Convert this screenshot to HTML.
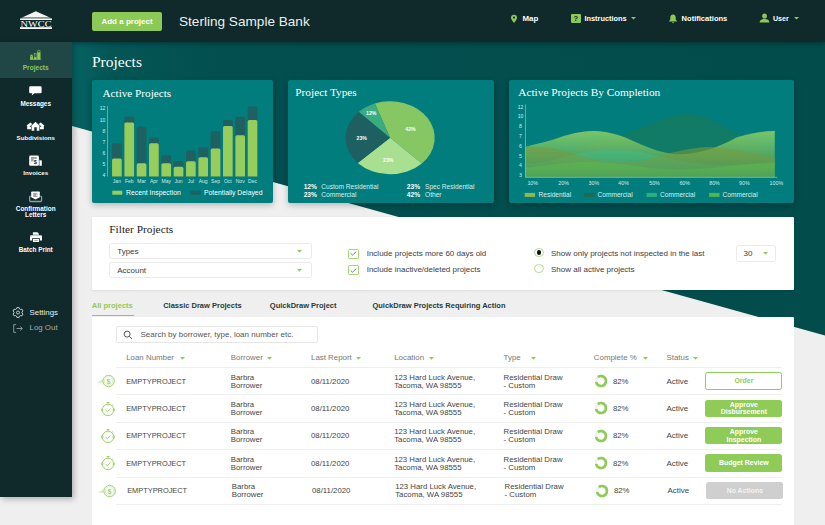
<!DOCTYPE html>
<html lang="en">
<head>
<meta charset="utf-8">
<title>Projects</title>
<style>
*{box-sizing:border-box;margin:0;padding:0}
html,body{width:825px;height:525px;overflow:hidden}
body{position:relative;background:#efefef;font-family:"Liberation Sans",sans-serif;color:#3a3a3a;font-size:7.5px}
.abs{position:absolute}
.serif{font-family:"Liberation Serif",serif}
#bg{position:absolute;left:0;top:0;width:825px;height:525px}
#header{position:absolute;left:0;top:0;width:825px;height:42px;background:#10292a;box-shadow:0 1px 5px rgba(0,0,0,.4)}
#sidebar{position:absolute;left:0;top:42px;width:72px;height:455px;background:#10292a;box-shadow:2px 2px 6px rgba(0,0,0,.28)}
.t{position:absolute;white-space:nowrap;line-height:1}
.w{color:#fff}
.sl{left:35.7px;transform:translate(-50%,-50%);font-size:6.4px}
.b{font-weight:bold}
.card{position:absolute;background:#007d7c;border-radius:2px;box-shadow:0 2px 6px rgba(0,0,0,.25)}
.panel{position:absolute;background:#fff;border-radius:1px}
/*LOWER*/
.sel{width:202.5px;height:16.1px;border:0.8px solid #e9e9e9;border-radius:2.5px;background:#fff}
.ft{font-size:8px;color:#3c3c3c;transform:translateY(-50%)}
.tb{font-size:7.5px;color:#1d3b3a;transform:translateY(-50%)}
.th{font-size:7.9px;color:#777;transform:translateY(-50%)}
.td{font-size:7.8px;color:#454545;transform:translateY(-50%)}
.td2{font-size:7.8px;color:#454545;transform:translateY(-50%);line-height:8px}
.btn{width:77.2px;height:17.5px;border-radius:2.5px;display:flex;align-items:center;justify-content:center;text-align:center;font-weight:bold;font-size:6.95px;line-height:7.4px}
/*LOWEREND*/
</style>
</head>
<body>
<svg id="bg" viewBox="0 0 825 525">
  <defs>
    <linearGradient id="g1" x1="0" x2="1" y1="0" y2="0">
      <stop offset="0" stop-color="#066362"/>
      <stop offset="0.05" stop-color="#045655"/>
      <stop offset="0.2" stop-color="#034f4f"/>
      <stop offset="1" stop-color="#034c4c"/>
    </linearGradient>
  </defs>
  <polygon points="72,42 825,42 825,335.6 72,126" fill="url(#g1)"/>
</svg>
<div id="header"></div>
<div id="sidebar"></div>

<!-- logo -->
<svg class="abs" style="left:19px;top:10px" width="34" height="20" viewBox="0 0 34 20">
  <polygon points="16.8,1.3 30.3,7.2 3.7,7.2" fill="#f4f4f4"/>
  <polygon points="3.7,7.2 30.3,7.2 32.4,8.6 1.6,8.6" fill="#fff" opacity=".5"/>
  <rect x="1" y="8.5" width="32" height="1.5" fill="#fff"/>
  <text x="17.1" y="16.75" text-anchor="middle" font-family="Liberation Serif, serif" font-size="7.6" fill="#fff" textLength="31" lengthAdjust="spacingAndGlyphs">NWCC</text>
  <rect x="1" y="17.2" width="32" height="1.8" fill="#fff"/>
</svg>
<div class="abs" style="left:92px;top:12.4px;width:70px;height:18.7px;background:#8dc955;border-radius:2px"></div>
<div class="t w b" style="left:127px;top:21.9px;font-size:8px;transform:translate(-50%,-50%)">Add a project</div>
<div class="t" style="left:179px;top:21.5px;font-size:13.6px;color:#e9f0f0;transform:translateY(-50%)">Sterling Sample Bank</div>
<!-- map pin -->
<svg class="abs" style="left:510px;top:14px" width="8" height="10" viewBox="0 0 8 10">
  <path d="M4 0.8C2.2 0.8 1 2.1 1 3.7C1 5.6 4 8.9 4 8.9S7 5.6 7 3.7C7 2.1 5.8 0.8 4 0.8Z" fill="#8dc955"/>
  <circle cx="4" cy="3.6" r="1.1" fill="#10292a"/>
</svg>
<div class="t w b" style="left:522.5px;top:18.6px;font-size:7.9px;transform:translateY(-50%)">Map</div>
<div class="abs" style="left:570.5px;top:14px;width:10.5px;height:9px;background:#8dc955;border-radius:1px"></div>
<div class="t b" style="left:575.8px;top:18.7px;font-size:7.5px;color:#10292a;transform:translate(-50%,-50%)">?</div>
<div class="t w b" style="left:584.4px;top:18.6px;font-size:7.4px;transform:translateY(-50%)">Instructions</div>
<svg class="abs" style="left:630.5px;top:17.3px" width="5" height="3" viewBox="0 0 5 3"><path d="M0 0H5L2.5 2.6Z" fill="#8dc955"/></svg>
<!-- bell -->
<svg class="abs" style="left:668px;top:13.5px" width="10" height="10" viewBox="0 0 10 10">
  <path d="M5 0.6C3.2 0.6 2.3 2 2.3 3.6V5.6L1 7.2V7.6H9V7.2L7.7 5.6V3.6C7.7 2 6.8 0.6 5 0.6Z" fill="#8dc955"/>
  <path d="M4 8.2H6A1 1 0 0 1 4 8.2Z" fill="#8dc955"/>
</svg>
<div class="t w b" style="left:681.6px;top:18.6px;font-size:7.55px;transform:translateY(-50%)">Notifications</div>
<!-- user -->
<svg class="abs" style="left:759px;top:13.1px" width="11" height="10" viewBox="0 0 11 10">
  <ellipse cx="5.5" cy="3" rx="2.4" ry="2.6" fill="#8dc955"/>
  <path d="M0.6 9.4C0.6 6.9 2.6 5.9 5.5 5.9S10.4 6.9 10.4 9.4Z" fill="#8dc955"/>
</svg>
<div class="t w b" style="left:773px;top:19.5px;font-size:7.1px;transform:translateY(-50%)">User</div>
<svg class="abs" style="left:793.5px;top:17.3px" width="5" height="3" viewBox="0 0 5 3"><path d="M0 0H5L2.5 2.6Z" fill="#8dc955"/></svg>
<!--HEADER-END-->

<div class="abs" style="left:0;top:42px;width:72px;height:36px;background:#214646"></div>
<!-- projects icon -->
<svg class="abs" style="left:29.8px;top:49.8px" width="11" height="10" viewBox="0 0 11 10">
  <rect x="0.7" y="5" width="1.9" height="4" fill="none" stroke="#8dc955" stroke-width="0.6"/>
  <rect x="0.4" y="6.4" width="2.5" height="2.8" fill="#8dc955"/>
  <rect x="4.2" y="3.5" width="1.9" height="5.5" fill="none" stroke="#8dc955" stroke-width="0.6"/>
  <rect x="3.9" y="7.1" width="2.5" height="2.1" fill="#8dc955"/>
  <rect x="7.7" y="0.7" width="2.3" height="8.2" fill="none" stroke="#8dc955" stroke-width="0.6"/>
  <rect x="7.4" y="2.3" width="2.9" height="6.9" fill="#8dc955"/>
  <rect x="0" y="8.9" width="10.8" height="0.8" fill="#8dc955"/>
</svg>
<div class="t b sl" style="top:67.6px;color:#8dc955;font-size:6.6px">Projects</div>
<!-- messages icon -->
<svg class="abs" style="left:28.8px;top:86.3px" width="13" height="10" viewBox="0 0 13 10">
  <path d="M1.3 0.2H11.5A1.1 1.1 0 0 1 12.6 1.3V6.2A1.1 1.1 0 0 1 11.5 7.3H5.6L2.6 9.6L3.4 7.3H1.3A1.1 1.1 0 0 1 0.2 6.2V1.3A1.1 1.1 0 0 1 1.3 0.2Z" fill="#fff"/>
</svg>
<div class="t b w sl" style="top:104.4px">Messages</div>
<!-- subdivisions icon -->
<svg class="abs" style="left:26px;top:121px" width="20" height="11" viewBox="0 0 20 11">
  <path d="M4.4 1.5L0.3 4.7H1.2V8.3H6.5V3.2Z" fill="#fff"/>
  <path d="M14.6 1.5L18.7 4.7H17.8V8.3H12.5V3.2Z" fill="#fff"/>
  <path d="M9.5 0.7L14.2 5.3H13.4V9.8H10.7V6.3H8.3V9.8H5.6V5.3H4.8Z" fill="#fff" stroke="#10292a" stroke-width="1.1" paint-order="stroke"/>
</svg>
<div class="t b w sl" style="top:138.3px;font-size:6.15px">Subdivisions</div>
<!-- invoices icon -->
<svg class="abs" style="left:29px;top:155px" width="14" height="12" viewBox="0 0 14 12">
  <rect x="0.2" y="0.5" width="9.7" height="10.3" rx="1.4" fill="#fff"/>
  <rect x="2" y="2.2" width="5.8" height="1.6" fill="#10292a" opacity=".5"/>
  <rect x="2" y="3.8" width="2.6" height="2.6" fill="#10292a" opacity=".4"/>
  <text x="6.4" y="9.3" font-size="5.6" font-weight="bold" font-family="Liberation Sans, sans-serif" fill="#10292a" text-anchor="middle">$</text>
  <rect x="9.9" y="4.6" width="0.9" height="6.2" fill="#fff" opacity=".55"/>
  <rect x="10.7" y="5.3" width="2.1" height="5.5" rx="0.6" fill="#fff"/>
</svg>
<div class="t b w sl" style="top:173.4px;font-size:6.2px">Invoices</div>
<!-- confirmation icon -->
<svg class="abs" style="left:29px;top:191px" width="14" height="12" viewBox="0 0 14 12">
  <rect x="0.6" y="5.2" width="12" height="5.3" rx="1.2" fill="none" stroke="#fff" stroke-opacity=".55" stroke-width="1.3"/>
  <path d="M2.9 0.5H10.1A0.7 0.7 0 0 1 10.8 1.2V6.3L6.5 8.5L2.2 6.3V1.2A0.7 0.7 0 0 1 2.9 0.5Z" fill="#fff" stroke="#10292a" stroke-width="0.8" paint-order="stroke"/>
  <rect x="4.2" y="1.9" width="4.2" height="4.1" fill="#10292a" opacity=".42"/>
  <rect x="7" y="2.9" width="1.5" height="0.6" fill="#fff"/>
  <rect x="7" y="4.4" width="1.5" height="0.6" fill="#fff"/>
</svg>
<div class="t b w sl" style="top:209.3px">Confirmation</div>
<div class="t b w sl" style="top:215.3px">Letters</div>
<!-- print icon -->
<svg class="abs" style="left:30px;top:232px" width="13" height="11" viewBox="0 0 13 11">
  <path d="M2.9 0.3H7.4L8.9 1.7V2.7H2.9Z" fill="#fff"/>
  <path d="M1.1 3.3H10.9A1.1 1.1 0 0 1 12 4.4V8.4H9.9V6.2H2.1V8.4H0V4.4A1.1 1.1 0 0 1 1.1 3.3Z" fill="#fff"/>
  <rect x="2.9" y="6.9" width="6.2" height="3.2" rx="0.4" fill="#fff"/>
  <rect x="4.2" y="8.1" width="3.6" height="0.8" rx="0.4" fill="#10292a" opacity=".4"/>
  <rect x="0.5" y="4" width="1" height="1" fill="#10292a" opacity=".3"/>
</svg>
<div class="t b w sl" style="top:250.3px">Batch Print</div>
<!-- settings -->
<svg class="abs" style="left:11.5px;top:307px" width="12" height="11" viewBox="0 0 12 11">
  <path d="M4.9 0.6H7.1L7.5 1.9L8.6 2.5L9.9 2.1L11 4L10 4.9V6.1L11 7L9.9 8.9L8.6 8.5L7.5 9.1L7.1 10.4H4.9L4.5 9.1L3.4 8.5L2.1 8.9L1 7L2 6.1V4.9L1 4L2.1 2.1L3.4 2.5L4.5 1.9Z" fill="none" stroke="#e8eeee" stroke-width="0.8" stroke-linejoin="round"/>
  <circle cx="6" cy="5.5" r="1.5" fill="none" stroke="#e8eeee" stroke-width="0.8"/>
</svg>
<div class="t" style="left:29.5px;top:312.8px;font-size:7.9px;color:#e8eeee;transform:translateY(-50%)">Settings</div>
<svg class="abs" style="left:12.5px;top:323.5px" width="11" height="9" viewBox="0 0 11 9">
  <path d="M3.2 0.6H0.7V8.4H3.2" fill="none" stroke="#9fb0b0" stroke-width="0.8"/>
  <path d="M3.6 4.5H9.2M7.2 2.5L9.4 4.5L7.2 6.5" fill="none" stroke="#9fb0b0" stroke-width="0.8"/>
</svg>
<div class="t" style="left:29.5px;top:328.2px;font-size:7.9px;color:#9fb0b0;transform:translateY(-50%)">Log Out</div>
<!--SIDEBAR-END-->

<div class="t w serif" style="left:92px;top:62.2px;font-size:15.5px;transform:translateY(-50%)">Projects</div>

<div class="card" style="left:91.5px;top:80px;width:181.5px;height:123.4px"></div>
<div class="t w serif" style="left:102.5px;top:94px;font-size:11.2px;transform:translateY(-50%)">Active Projects</div>
<svg class="abs" style="left:91px;top:80px;font-family:'Liberation Sans',sans-serif" width="183" height="123" viewBox="0 0 183 123"><g transform="translate(0.3,0)">
<rect x="16.0" y="26" width="0.6" height="70.6" fill="#9fd0cf"/>
<text x="14.1" y="30.4" text-anchor="end" font-size="5" fill="#d7ecec">12</text><text x="14.1" y="41.6" text-anchor="end" font-size="5" fill="#d7ecec">10</text><text x="14.1" y="53.1" text-anchor="end" font-size="5" fill="#d7ecec">8</text><text x="14.1" y="63.7" text-anchor="end" font-size="5" fill="#d7ecec">7</text><text x="14.1" y="74.9" text-anchor="end" font-size="5" fill="#d7ecec">6</text><text x="14.1" y="86.1" text-anchor="end" font-size="5" fill="#d7ecec">5</text><text x="14.1" y="97.0" text-anchor="end" font-size="5" fill="#d7ecec">4</text>
<path d="M20.75 96.60V64.90Q20.75 63.30 22.35 63.30H28.85Q30.45 63.30 30.45 64.90V96.60Z" fill="#1f6061"/><path d="M20.75 96.60V80.10Q20.75 78.50 22.35 78.50H28.85Q30.45 78.50 30.45 80.10V96.60Z" fill="#97cd5c"/><text x="25.60" y="103.1" text-anchor="middle" font-size="5" fill="#d7ecec">Jan</text><path d="M33.08 96.60V38.20Q33.08 36.60 34.68 36.60H41.18Q42.78 36.60 42.78 38.20V96.60Z" fill="#1f6061"/><path d="M33.08 96.60V44.10Q33.08 42.50 34.68 42.50H41.18Q42.78 42.50 42.78 44.10V96.60Z" fill="#97cd5c"/><text x="37.93" y="103.1" text-anchor="middle" font-size="5" fill="#d7ecec">Feb</text><path d="M45.41 96.60V48.40Q45.41 46.80 47.01 46.80H53.51Q55.11 46.80 55.11 48.40V96.60Z" fill="#1f6061"/><path d="M45.41 96.60V84.90Q45.41 83.30 47.01 83.30H53.51Q55.11 83.30 55.11 84.90V96.60Z" fill="#97cd5c"/><text x="50.26" y="103.1" text-anchor="middle" font-size="5" fill="#d7ecec">Mar</text><path d="M57.74 96.60V59.30Q57.74 57.70 59.34 57.70H65.84Q67.44 57.70 67.44 59.30V96.60Z" fill="#1f6061"/><path d="M57.74 96.60V64.90Q57.74 63.30 59.34 63.30H65.84Q67.44 63.30 67.44 64.90V96.60Z" fill="#97cd5c"/><text x="62.59" y="103.1" text-anchor="middle" font-size="5" fill="#d7ecec">Apr</text><path d="M70.07 96.60V76.90Q70.07 75.30 71.67 75.30H78.17Q79.77 75.30 79.77 76.90V96.60Z" fill="#1f6061"/><path d="M70.07 96.60V84.90Q70.07 83.30 71.67 83.30H78.17Q79.77 83.30 79.77 84.90V96.60Z" fill="#97cd5c"/><text x="74.92" y="103.1" text-anchor="middle" font-size="5" fill="#d7ecec">May</text><path d="M82.40 96.60V82.80Q82.40 81.20 84.00 81.20H90.50Q92.10 81.20 92.10 82.80V96.60Z" fill="#1f6061"/><path d="M82.40 96.60V88.30Q82.40 86.70 84.00 86.70H90.50Q92.10 86.70 92.10 88.30V96.60Z" fill="#97cd5c"/><text x="87.25" y="103.1" text-anchor="middle" font-size="5" fill="#d7ecec">Jun</text><path d="M94.73 96.60V72.10Q94.73 70.50 96.33 70.50H102.83Q104.43 70.50 104.43 72.10V96.60Z" fill="#1f6061"/><path d="M94.73 96.60V82.80Q94.73 81.20 96.33 81.20H102.83Q104.43 81.20 104.43 82.80V96.60Z" fill="#97cd5c"/><text x="99.58" y="103.1" text-anchor="middle" font-size="5" fill="#d7ecec">Jul</text><path d="M107.06 96.60V69.20Q107.06 67.60 108.66 67.60H115.16Q116.76 67.60 116.76 69.20V96.60Z" fill="#1f6061"/><path d="M107.06 96.60V78.80Q107.06 77.20 108.66 77.20H115.16Q116.76 77.20 116.76 78.80V96.60Z" fill="#97cd5c"/><text x="111.91" y="103.1" text-anchor="middle" font-size="5" fill="#d7ecec">Aug</text><path d="M119.39 96.60V52.90Q119.39 51.30 120.99 51.30H127.49Q129.09 51.30 129.09 52.90V96.60Z" fill="#1f6061"/><path d="M119.39 96.60V70.20Q119.39 68.60 120.99 68.60H127.49Q129.09 68.60 129.09 70.20V96.60Z" fill="#97cd5c"/><text x="124.24" y="103.1" text-anchor="middle" font-size="5" fill="#d7ecec">Sep</text><path d="M131.72 96.60V41.70Q131.72 40.10 133.32 40.10H139.82Q141.42 40.10 141.42 41.70V96.60Z" fill="#1f6061"/><path d="M131.72 96.60V47.60Q131.72 46.00 133.32 46.00H139.82Q141.42 46.00 141.42 47.60V96.60Z" fill="#97cd5c"/><text x="136.57" y="103.1" text-anchor="middle" font-size="5" fill="#d7ecec">Oct</text><path d="M144.05 96.60V38.50Q144.05 36.90 145.65 36.90H152.15Q153.75 36.90 153.75 38.50V96.60Z" fill="#1f6061"/><path d="M144.05 96.60V56.90Q144.05 55.30 145.65 55.30H152.15Q153.75 55.30 153.75 56.90V96.60Z" fill="#97cd5c"/><text x="148.90" y="103.1" text-anchor="middle" font-size="5" fill="#d7ecec">Nov</text><path d="M156.38 96.60V28.10Q156.38 26.50 157.98 26.50H164.48Q166.08 26.50 166.08 28.10V96.60Z" fill="#1f6061"/><path d="M156.38 96.60V41.70Q156.38 40.10 157.98 40.10H164.48Q166.08 40.10 166.08 41.70V96.60Z" fill="#97cd5c"/><text x="161.23" y="103.1" text-anchor="middle" font-size="5" fill="#d7ecec">Dec</text>
<rect x="21.0" y="110.69999999999999" width="10" height="4" fill="#97cd5c"/>
<rect x="99.1" y="110.69999999999999" width="10" height="4" fill="#1f6061"/>
</g></svg>
<div class="t w" style="left:126px;top:192.9px;font-size:6.85px;transform:translateY(-50%)">Recent Inspection</div>
<div class="t w" style="left:203.9px;top:192.9px;font-size:6.85px;transform:translateY(-50%)">Potentially Delayed</div>


<div class="card" style="left:288px;top:80px;width:206px;height:123.4px"></div>
<div class="t w serif" style="left:295.3px;top:92.5px;font-size:11.3px;transform:translateY(-50%)">Project Types</div>
<svg class="abs" style="left:0;top:0;font-family:'Liberation Sans',sans-serif" width="825" height="525" viewBox="0 0 825 525"><path d="M390.1 137.8L374.85 103.50A44.6 36.5 0 0 1 421.86 163.43Z" fill="#86c763"/><path d="M390.1 137.8L421.86 163.43A44.6 36.5 0 0 1 357.75 162.92Z" fill="#a8df90"/><path d="M390.1 137.8L357.75 162.92A44.6 36.5 0 0 1 358.84 111.77Z" fill="#1e6061"/><path d="M390.1 137.8L358.84 111.77A44.6 36.5 0 0 1 374.85 103.50Z" fill="#3bab80"/><text x="371.2" y="115.1" text-anchor="middle" font-size="5.2" font-weight="bold" fill="#fff">12%</text><text x="410.5" y="130.7" text-anchor="middle" font-size="5.2" font-weight="bold" fill="#fff">42%</text><text x="361.7" y="139.9" text-anchor="middle" font-size="5.2" font-weight="bold" fill="#fff">23%</text><text x="388.2" y="161.5" text-anchor="middle" font-size="5.2" font-weight="bold" fill="#fff">23%</text></svg>
<div class="t w b" style="left:303.7px;top:187px;font-size:6.6px;transform:translateY(-50%)">12%</div>
<div class="t w" style="left:321.3px;top:187px;font-size:6.6px;transform:translateY(-50%);color:#d9eeee">Custom Residential</div>
<div class="t w b" style="left:303.7px;top:195.1px;font-size:6.6px;transform:translateY(-50%)">23%</div>
<div class="t w" style="left:321.3px;top:195.1px;font-size:6.6px;transform:translateY(-50%);color:#d9eeee">Commercial</div>
<div class="t w b" style="left:406.8px;top:187px;font-size:6.6px;transform:translateY(-50%)">23%</div>
<div class="t w" style="left:425px;top:187px;font-size:6.6px;transform:translateY(-50%);color:#d9eeee">Spec Residential</div>
<div class="t w b" style="left:406.8px;top:195.1px;font-size:6.6px;transform:translateY(-50%)">42%</div>
<div class="t w" style="left:425px;top:195.1px;font-size:6.6px;transform:translateY(-50%);color:#d9eeee">Other</div>

<!--C3S-->
<div class="card" style="left:509px;top:80px;width:284.6px;height:123.2px"></div>
<div class="t w serif" style="left:518.2px;top:92.7px;font-size:11.35px;transform:translateY(-50%)">Active Projects By Completion</div>
<svg class="abs" style="left:0;top:0;font-family:'Liberation Sans',sans-serif" width="825" height="525" viewBox="0 0 825 525">
<defs><linearGradient id="ga_dark" gradientUnits="userSpaceOnUse" x1="0" y1="114.4" x2="0" y2="177.2"><stop offset="0" stop-color="#23784c" stop-opacity="0.52"/><stop offset="1" stop-color="#23784c" stop-opacity="0.38"/></linearGradient><linearGradient id="ga_light" gradientUnits="userSpaceOnUse" x1="0" y1="131.1" x2="0" y2="177.2"><stop offset="0" stop-color="#8fd264" stop-opacity="0.85"/><stop offset="1" stop-color="#8fd264" stop-opacity="0.2"/></linearGradient><linearGradient id="ga_teal" gradientUnits="userSpaceOnUse" x1="0" y1="150.2" x2="0" y2="177.2"><stop offset="0" stop-color="#3fbf8a" stop-opacity="0.5"/><stop offset="1" stop-color="#3fbf8a" stop-opacity="0.2"/></linearGradient><linearGradient id="ga_olive" gradientUnits="userSpaceOnUse" x1="0" y1="147.0" x2="0" y2="177.2"><stop offset="0" stop-color="#7d9a38" stop-opacity="0.6"/><stop offset="1" stop-color="#7d9a38" stop-opacity="0.3"/></linearGradient><linearGradient id="ga_bright" gradientUnits="userSpaceOnUse" x1="0" y1="162.3" x2="0" y2="177.2"><stop offset="0" stop-color="#5cb84c" stop-opacity="0.65"/><stop offset="1" stop-color="#5cb84c" stop-opacity="0.3"/></linearGradient></defs>
<path d="M525.6 166.3C528.7 165.9 537.1 166.3 544.3 163.9C551.4 161.5 560.4 155.2 568.5 151.8C576.6 148.4 584.2 146.3 592.8 143.7C601.4 141.0 610.9 139.1 620.3 135.9C629.7 132.8 641.4 127.8 649.4 124.8C657.4 121.8 661.7 119.3 668.0 117.6C674.3 115.9 680.7 114.2 687.4 114.4C694.1 114.6 701.1 116.0 708.0 118.6C714.9 121.2 722.3 126.0 729.0 129.8C735.7 133.6 742.2 138.3 748.0 141.2C753.8 144.1 759.3 145.9 763.8 147.3C768.3 148.7 773.0 149.2 774.8 149.6L774.8 177.2L525.6 177.2Z" fill="url(#ga_dark)"/><path d="M525.6 166.3C528.7 165.9 537.1 166.3 544.3 163.9C551.4 161.5 560.4 155.2 568.5 151.8C576.6 148.4 584.2 146.3 592.8 143.7C601.4 141.0 610.9 139.1 620.3 135.9C629.7 132.8 641.4 127.8 649.4 124.8C657.4 121.8 661.7 119.3 668.0 117.6C674.3 115.9 680.7 114.2 687.4 114.4C694.1 114.6 701.1 116.0 708.0 118.6C714.9 121.2 722.3 126.0 729.0 129.8C735.7 133.6 742.2 138.3 748.0 141.2C753.8 144.1 759.3 145.9 763.8 147.3C768.3 148.7 773.0 149.2 774.8 149.6" fill="none" stroke="#23784c" stroke-opacity=".5" stroke-width=".4"/><path d="M525.6 146.9C529.2 146.0 539.6 143.7 547.0 141.6C554.4 139.5 562.1 136.2 570.0 134.4C577.9 132.7 586.6 131.0 594.4 131.1C602.2 131.2 610.5 133.1 617.0 134.8C623.5 136.5 627.9 139.1 633.3 141.3C638.7 143.5 644.1 146.1 649.4 148.0C654.7 149.9 659.8 151.7 665.0 152.8C670.2 153.9 675.3 154.6 680.6 154.6C685.9 154.6 691.6 153.6 697.0 152.6C702.4 151.6 707.9 150.1 712.9 148.4C717.9 146.7 722.5 144.5 727.0 142.5C731.5 140.5 734.4 138.2 740.0 136.5C745.6 134.8 754.6 133.1 760.4 132.2C766.2 131.3 772.4 131.3 774.8 131.1L774.8 177.2L525.6 177.2Z" fill="url(#ga_light)"/><path d="M525.6 146.9C529.2 146.0 539.6 143.7 547.0 141.6C554.4 139.5 562.1 136.2 570.0 134.4C577.9 132.7 586.6 131.0 594.4 131.1C602.2 131.2 610.5 133.1 617.0 134.8C623.5 136.5 627.9 139.1 633.3 141.3C638.7 143.5 644.1 146.1 649.4 148.0C654.7 149.9 659.8 151.7 665.0 152.8C670.2 153.9 675.3 154.6 680.6 154.6C685.9 154.6 691.6 153.6 697.0 152.6C702.4 151.6 707.9 150.1 712.9 148.4C717.9 146.7 722.5 144.5 727.0 142.5C731.5 140.5 734.4 138.2 740.0 136.5C745.6 134.8 754.6 133.1 760.4 132.2C766.2 131.3 772.4 131.3 774.8 131.1" fill="none" stroke="#8fd264" stroke-opacity=".5" stroke-width=".4"/><path d="M525.6 164.0C528.7 163.8 537.1 164.0 544.3 162.6C551.4 161.2 560.4 157.7 568.5 155.8C576.6 154.0 585.8 152.4 592.8 151.5C599.8 150.6 603.9 150.2 610.6 150.2C617.4 150.2 626.8 150.8 633.3 151.5C639.8 152.2 643.2 153.0 649.4 154.3C655.6 155.6 662.8 157.9 670.5 159.4C678.2 160.9 688.0 162.6 695.9 163.6C703.8 164.6 709.8 165.2 718.0 165.3C726.2 165.4 735.5 165.0 745.0 164.4C754.5 163.8 769.8 162.3 774.8 161.9L774.8 177.2L525.6 177.2Z" fill="url(#ga_teal)"/><path d="M525.6 164.0C528.7 163.8 537.1 164.0 544.3 162.6C551.4 161.2 560.4 157.7 568.5 155.8C576.6 154.0 585.8 152.4 592.8 151.5C599.8 150.6 603.9 150.2 610.6 150.2C617.4 150.2 626.8 150.8 633.3 151.5C639.8 152.2 643.2 153.0 649.4 154.3C655.6 155.6 662.8 157.9 670.5 159.4C678.2 160.9 688.0 162.6 695.9 163.6C703.8 164.6 709.8 165.2 718.0 165.3C726.2 165.4 735.5 165.0 745.0 164.4C754.5 163.8 769.8 162.3 774.8 161.9" fill="none" stroke="#3fbf8a" stroke-opacity=".5" stroke-width=".4"/><path d="M525.6 147.0C528.8 147.1 540.5 147.2 545.0 147.4C549.5 147.7 548.5 147.6 552.4 148.5C556.3 149.4 563.1 151.1 568.5 152.6C573.9 154.1 579.3 156.1 584.7 157.4C590.1 158.8 595.1 159.8 601.0 160.7C606.9 161.6 614.4 162.5 620.3 162.6C626.2 162.7 631.6 162.1 636.5 161.5C641.4 160.9 643.0 160.8 649.4 159.2C655.8 157.6 666.1 154.1 675.0 152.2C683.9 150.2 694.9 148.2 702.7 147.5C710.5 146.8 715.8 147.7 722.0 148.3C728.2 148.9 733.7 149.8 740.0 150.9C746.3 152.0 754.2 153.7 760.0 154.8C765.8 155.9 772.3 157.2 774.8 157.7L774.8 177.2L525.6 177.2Z" fill="url(#ga_olive)"/><path d="M525.6 147.0C528.8 147.1 540.5 147.2 545.0 147.4C549.5 147.7 548.5 147.6 552.4 148.5C556.3 149.4 563.1 151.1 568.5 152.6C573.9 154.1 579.3 156.1 584.7 157.4C590.1 158.8 595.1 159.8 601.0 160.7C606.9 161.6 614.4 162.5 620.3 162.6C626.2 162.7 631.6 162.1 636.5 161.5C641.4 160.9 643.0 160.8 649.4 159.2C655.8 157.6 666.1 154.1 675.0 152.2C683.9 150.2 694.9 148.2 702.7 147.5C710.5 146.8 715.8 147.7 722.0 148.3C728.2 148.9 733.7 149.8 740.0 150.9C746.3 152.0 754.2 153.7 760.0 154.8C765.8 155.9 772.3 157.2 774.8 157.7" fill="none" stroke="#7d9a38" stroke-opacity=".5" stroke-width=".4"/><path d="M525.6 168.0C530.1 167.4 542.5 165.6 552.4 164.7C562.2 163.8 573.9 162.4 584.7 162.3C595.5 162.2 606.2 163.0 617.0 163.9C627.8 164.8 639.1 166.9 649.4 167.9C659.7 168.9 668.9 169.8 679.0 169.9C689.1 170.0 699.8 169.1 710.0 168.3C720.2 167.5 729.2 166.2 740.0 165.3C750.8 164.4 769.0 163.5 774.8 163.1L774.8 177.2L525.6 177.2Z" fill="url(#ga_bright)"/><path d="M525.6 168.0C530.1 167.4 542.5 165.6 552.4 164.7C562.2 163.8 573.9 162.4 584.7 162.3C595.5 162.2 606.2 163.0 617.0 163.9C627.8 164.8 639.1 166.9 649.4 167.9C659.7 168.9 668.9 169.8 679.0 169.9C689.1 170.0 699.8 169.1 710.0 168.3C720.2 167.5 729.2 166.2 740.0 165.3C750.8 164.4 769.0 163.5 774.8 163.1" fill="none" stroke="#5cb84c" stroke-opacity=".5" stroke-width=".4"/>
<rect x="525.3" y="104.5" width="0.6" height="72.7" fill="#9fd0cf"/>
<rect x="525.3" y="176.9" width="252" height="0.6" fill="#9fd0cf"/>
<text x="520.5" y="108.8" text-anchor="middle" font-size="5.1" fill="#d7ecec">12</text><text x="520.5" y="118.2" text-anchor="middle" font-size="5.1" fill="#d7ecec">10</text><text x="520.5" y="128.4" text-anchor="middle" font-size="5.1" fill="#d7ecec">8</text><text x="520.5" y="138.2" text-anchor="middle" font-size="5.1" fill="#d7ecec">7</text><text x="520.5" y="148.1" text-anchor="middle" font-size="5.1" fill="#d7ecec">6</text><text x="520.5" y="157.5" text-anchor="middle" font-size="5.1" fill="#d7ecec">5</text><text x="520.5" y="167.0" text-anchor="middle" font-size="5.1" fill="#d7ecec">4</text><text x="520.5" y="176.8" text-anchor="middle" font-size="5.1" fill="#d7ecec">3</text><text x="532.7" y="184.8" text-anchor="middle" font-size="5.3" fill="#d7ecec">10%</text><text x="563.6" y="184.8" text-anchor="middle" font-size="5.3" fill="#d7ecec">20%</text><text x="593.8" y="184.8" text-anchor="middle" font-size="5.3" fill="#d7ecec">30%</text><text x="623.6" y="184.8" text-anchor="middle" font-size="5.3" fill="#d7ecec">40%</text><text x="654.5" y="184.8" text-anchor="middle" font-size="5.3" fill="#d7ecec">50%</text><text x="684.7" y="184.8" text-anchor="middle" font-size="5.3" fill="#d7ecec">60%</text><text x="714.5" y="184.8" text-anchor="middle" font-size="5.3" fill="#d7ecec">80%</text><text x="744.4" y="184.8" text-anchor="middle" font-size="5.3" fill="#d7ecec">90%</text><text x="776.4" y="184.8" text-anchor="middle" font-size="5.3" fill="#d7ecec">100%</text><rect x="524.7" y="192.9" width="10.4" height="4" fill="#8fb94f"/><rect x="584.4" y="192.9" width="10.4" height="4" fill="#1f6b50"/><rect x="646.5" y="192.9" width="10.4" height="4" fill="#2fae7c"/><rect x="709.1" y="192.9" width="10.4" height="4" fill="#4fb752"/>
</svg>
<div class="t" style="left:538.5px;top:194.8px;font-size:6.6px;color:#d9eeee;transform:translateY(-50%)">Residential</div><div class="t" style="left:597.5px;top:194.8px;font-size:6.6px;color:#d9eeee;transform:translateY(-50%)">Commercial</div><div class="t" style="left:660px;top:194.8px;font-size:6.6px;color:#d9eeee;transform:translateY(-50%)">Commercial</div><div class="t" style="left:722.5px;top:194.8px;font-size:6.6px;color:#d9eeee;transform:translateY(-50%)">Commercial</div>
<!--C3E-->
<!--FILTERS-->
<div class="panel" style="left:91.5px;top:216.7px;width:702.2px;height:73px;box-shadow:0 1px 3px rgba(0,0,0,.08)"></div>
<div class="t serif" style="left:109.3px;top:229.6px;font-size:11.35px;color:#222;transform:translateY(-50%)">Filter Projects</div>
<div class="abs sel" style="left:109.2px;top:243.3px"></div>
<div class="t ft" style="left:117.2px;top:252.1px">Types</div>
<svg class="abs" style="left:296.5px;top:250.3px" width="5" height="3" viewBox="0 0 5 3"><path d="M0 0H5L2.5 2.7Z" fill="#8fcb57"/></svg>
<div class="abs sel" style="left:109.2px;top:262.1px"></div>
<div class="t ft" style="left:117.2px;top:270.8px">Account</div>
<svg class="abs" style="left:296.5px;top:269.1px" width="5" height="3" viewBox="0 0 5 3"><path d="M0 0H5L2.5 2.7Z" fill="#8fcb57"/></svg>
<div class="abs" style="left:347.6px;top:248.8px;width:11.2px;height:9.8px;border:0.8px solid #a3d877;border-radius:1.2px;background:#fff"></div>
<svg class="abs" style="left:350.0px;top:251.4px" width="7" height="5" viewBox="0 0 7 5"><path d="M0.6 2.4L2.5 4.2L6.3 0.6" fill="none" stroke="#555" stroke-width="0.75"/></svg>
<div class="t ft" style="left:366.7px;top:254px">Include projects more 60 days old</div>
<div class="abs" style="left:347.6px;top:265px;width:11.2px;height:9.8px;border:0.8px solid #a3d877;border-radius:1.2px;background:#fff"></div>
<svg class="abs" style="left:350.0px;top:267.6px" width="7" height="5" viewBox="0 0 7 5"><path d="M0.6 2.4L2.5 4.2L6.3 0.6" fill="none" stroke="#555" stroke-width="0.75"/></svg>
<div class="t ft" style="left:366.7px;top:270.1px">Include inactive/deleted projects</div>
<div class="abs" style="left:534.4px;top:248.2px;width:9.2px;height:9.2px;border:0.8px solid #b2dc94;border-radius:50%;background:#fff"></div>
<div class="abs" style="left:536.6px;top:250.4px;width:4.8px;height:4.8px;border-radius:50%;background:#111"></div>
<div class="t ft" style="left:551px;top:254.2px">Show only projects not inspected in the last</div>
<div class="abs" style="left:534.4px;top:263.6px;width:9.2px;height:9.2px;border:0.8px solid #b2dc94;border-radius:50%;background:#fff"></div>
<div class="t ft" style="left:551px;top:270.2px">Show all active projects</div>
<div class="abs sel" style="left:735.5px;top:245px;width:40.5px;height:16.5px"></div>
<div class="t ft" style="left:743.5px;top:254.2px">30</div>
<svg class="abs" style="left:762.8px;top:252.2px" width="5" height="3" viewBox="0 0 5 3"><path d="M0 0H5L2.5 2.7Z" fill="#8fcb57"/></svg>

<div class="t b" style="left:91.7px;top:305.9px;font-size:7.55px;color:#8fcb57;transform:translateY(-50%)">All projects</div>
<div class="abs" style="left:91.7px;top:314.7px;width:42.8px;height:1.4px;background:#8fcb57"></div>
<div class="t b tb" style="left:163.2px;top:305.9px">Classic Draw Projects</div>
<div class="t b tb" style="left:269.8px;top:305.9px">QuickDraw Project</div>
<div class="t b tb" style="left:372.4px;top:305.9px">QuickDraw Projects Requiring Action</div>
<!--FILTERE-->
<!--TABLES-->
<div class="panel" style="left:91.5px;top:316.7px;width:702.2px;height:210px"></div>
<div class="abs" style="left:116.2px;top:326.2px;width:201.6px;height:16.6px;border:0.8px solid #e6e6e6;border-radius:2px;background:#fff"></div>
<svg class="abs" style="left:122.6px;top:329.8px" width="10" height="10" viewBox="0 0 9 9"><circle cx="3.7" cy="3.7" r="2.7" fill="none" stroke="#444" stroke-width="0.8"/><path d="M5.7 5.7L8 8" stroke="#444" stroke-width="0.8"/></svg>
<div class="t" style="left:140.5px;top:334.8px;font-size:8px;color:#555;transform:translateY(-50%)">Search by borrower, type, loan number etc.</div>
<div class="t th" style="left:126.2px;top:358.3px">Loan Number</div><svg class="abs" style="left:179.5px;top:357px" width="5" height="3" viewBox="0 0 5 3"><path d="M0 0H5L2.5 2.7Z" fill="#8fcb57"/></svg><div class="t th" style="left:230.8px;top:358.3px">Borrower</div><svg class="abs" style="left:266.5px;top:357px" width="5" height="3" viewBox="0 0 5 3"><path d="M0 0H5L2.5 2.7Z" fill="#8fcb57"/></svg><div class="t th" style="left:311px;top:358.3px">Last Report</div><svg class="abs" style="left:355.5px;top:357px" width="5" height="3" viewBox="0 0 5 3"><path d="M0 0H5L2.5 2.7Z" fill="#8fcb57"/></svg><div class="t th" style="left:394.2px;top:358.3px">Location</div><svg class="abs" style="left:428.5px;top:357px" width="5" height="3" viewBox="0 0 5 3"><path d="M0 0H5L2.5 2.7Z" fill="#8fcb57"/></svg><div class="t th" style="left:503.6px;top:358.3px">Type</div><svg class="abs" style="left:530.5px;top:357px" width="5" height="3" viewBox="0 0 5 3"><path d="M0 0H5L2.5 2.7Z" fill="#8fcb57"/></svg><div class="t th" style="left:593.8px;top:358.3px">Complete %</div><svg class="abs" style="left:642.5px;top:357px" width="5" height="3" viewBox="0 0 5 3"><path d="M0 0H5L2.5 2.7Z" fill="#8fcb57"/></svg><div class="t th" style="left:666.5px;top:358.3px">Status</div><svg class="abs" style="left:692.5px;top:357px" width="5" height="3" viewBox="0 0 5 3"><path d="M0 0H5L2.5 2.7Z" fill="#8fcb57"/></svg><div class="abs" style="left:115.5px;top:366.75px;width:666.5px;height:0.7px;background:#efefef"></div><div class="abs" style="left:115.5px;top:394.35px;width:666.5px;height:0.7px;background:#efefef"></div><div class="abs" style="left:115.5px;top:421.95px;width:666.5px;height:0.7px;background:#efefef"></div><div class="abs" style="left:115.5px;top:449.45px;width:666.5px;height:0.7px;background:#efefef"></div><div class="abs" style="left:115.5px;top:477.05px;width:666.5px;height:0.7px;background:#efefef"></div><div class="abs" style="left:115.5px;top:504.15px;width:666.5px;height:0.7px;background:#efefef"></div><svg class="abs" style="opacity:.85;left:96.4px;top:374.45px;font-family:'Liberation Sans',sans-serif" width="20" height="14" viewBox="0 0 20 14">
<circle cx="12.6" cy="7" r="5.7" fill="none" stroke="#8fcb57" stroke-width="1"/>
<circle cx="12.6" cy="7" r="4.3" fill="none" stroke="#8fcb57" stroke-width="0.45" opacity=".8"/>
<text x="12.6" y="9.5" text-anchor="middle" font-size="7.2" font-weight="bold" fill="#8fcb57">$</text>
<path d="M1 8.8L6.6 5.2V8.8Z" fill="#8fcb57" opacity=".45"/></svg><div class="t td" style="left:126.2px;top:381.5px;font-size:7.4px">EMPTYPROJECT</div><div class="t td2" style="left:230.8px;top:381.5px">Barbra<br>Borrower</div><div class="t td" style="left:311px;top:381.5px">08/11/2020</div><div class="t td2" style="left:394.2px;top:381.5px">123 Hard Luck Avenue,<br>Tacoma, WA 98555</div><div class="t td2" style="left:503.6px;top:381.5px">Residential Draw<br>- Custom</div><svg class="abs" style="left:593.8px;top:374.05px" width="14" height="14" viewBox="0 0 14 14">
<circle cx="7" cy="7" r="5" fill="none" stroke="#f0f0f0" stroke-width="2.6"/>
<path d="M3.85 3.11A5 5 0 1 1 2.09 7.95" fill="none" stroke="#8fcb57" stroke-width="2.7"/></svg><div class="t td" style="left:612.9px;top:381.5px">82%</div><div class="t td" style="left:666.5px;top:381.5px;font-size:8px">Active</div><div class="abs btn" style="left:705.3px;top:372.15px;background:#fff;border:0.9px solid #8fcb57;color:#8fcb57"><span>Order</span></div><svg class="abs" style="opacity:.85;left:99.8px;top:400.5px" width="16" height="16" viewBox="0 0 16 16">
<circle cx="8" cy="8.9" r="5.7" fill="none" stroke="#8fcb57" stroke-width="1"/>
<path d="M6.6 1.5H9.4M8 1.5V3.2" stroke="#8fcb57" stroke-width="1"/>
<path d="M12.2 3.6L13.3 4.7M1.6 7.6V10.2M14.4 7.6V10.2" stroke="#8fcb57" stroke-width="0.9"/>
<path d="M8 4.2V5.2M8 12.6V13.6M3.3 8.9H4.3M11.7 8.9H12.7" stroke="#8fcb57" stroke-width="0.6"/>
<path d="M5.7 9.1L7.4 10.7L10.4 7.5" fill="none" stroke="#8fcb57" stroke-width="1"/></svg><div class="t td" style="left:126.2px;top:408.9px;font-size:7.4px">EMPTYPROJECT</div><div class="t td2" style="left:230.8px;top:408.9px">Barbra<br>Borrower</div><div class="t td" style="left:311px;top:408.9px">08/11/2020</div><div class="t td2" style="left:394.2px;top:408.9px">123 Hard Luck Avenue,<br>Tacoma, WA 98555</div><div class="t td2" style="left:503.6px;top:408.9px">Residential Draw<br>- Custom</div><svg class="abs" style="left:593.8px;top:401.45px" width="14" height="14" viewBox="0 0 14 14">
<circle cx="7" cy="7" r="5" fill="none" stroke="#f0f0f0" stroke-width="2.6"/>
<path d="M3.85 3.11A5 5 0 1 1 2.09 7.95" fill="none" stroke="#8fcb57" stroke-width="2.7"/></svg><div class="t td" style="left:612.9px;top:408.9px">82%</div><div class="t td" style="left:666.5px;top:408.9px;font-size:8px">Active</div><div class="abs btn" style="left:705.3px;top:399.55px;background:#8fcb57;color:#fff"><span>Approve<br>Disbursement</span></div><svg class="abs" style="opacity:.85;left:99.8px;top:427.8px" width="16" height="16" viewBox="0 0 16 16">
<circle cx="8" cy="8.9" r="5.7" fill="none" stroke="#8fcb57" stroke-width="1"/>
<path d="M6.6 1.5H9.4M8 1.5V3.2" stroke="#8fcb57" stroke-width="1"/>
<path d="M12.2 3.6L13.3 4.7M1.6 7.6V10.2M14.4 7.6V10.2" stroke="#8fcb57" stroke-width="0.9"/>
<path d="M8 4.2V5.2M8 12.6V13.6M3.3 8.9H4.3M11.7 8.9H12.7" stroke="#8fcb57" stroke-width="0.6"/>
<path d="M5.7 9.1L7.4 10.7L10.4 7.5" fill="none" stroke="#8fcb57" stroke-width="1"/></svg><div class="t td" style="left:126.2px;top:436.2px;font-size:7.4px">EMPTYPROJECT</div><div class="t td2" style="left:230.8px;top:436.2px">Barbra<br>Borrower</div><div class="t td" style="left:311px;top:436.2px">08/11/2020</div><div class="t td2" style="left:394.2px;top:436.2px">123 Hard Luck Avenue,<br>Tacoma, WA 98555</div><div class="t td2" style="left:503.6px;top:436.2px">Residential Draw<br>- Custom</div><svg class="abs" style="left:593.8px;top:428.75px" width="14" height="14" viewBox="0 0 14 14">
<circle cx="7" cy="7" r="5" fill="none" stroke="#f0f0f0" stroke-width="2.6"/>
<path d="M3.85 3.11A5 5 0 1 1 2.09 7.95" fill="none" stroke="#8fcb57" stroke-width="2.7"/></svg><div class="t td" style="left:612.9px;top:436.2px">82%</div><div class="t td" style="left:666.5px;top:436.2px;font-size:8px">Active</div><div class="abs btn" style="left:705.3px;top:426.85px;background:#8fcb57;color:#fff"><span>Approve<br>Inspection</span></div><svg class="abs" style="opacity:.85;left:99.8px;top:455.3px" width="16" height="16" viewBox="0 0 16 16">
<circle cx="8" cy="8.9" r="5.7" fill="none" stroke="#8fcb57" stroke-width="1"/>
<path d="M6.6 1.5H9.4M8 1.5V3.2" stroke="#8fcb57" stroke-width="1"/>
<path d="M12.2 3.6L13.3 4.7M1.6 7.6V10.2M14.4 7.6V10.2" stroke="#8fcb57" stroke-width="0.9"/>
<path d="M8 4.2V5.2M8 12.6V13.6M3.3 8.9H4.3M11.7 8.9H12.7" stroke="#8fcb57" stroke-width="0.6"/>
<path d="M5.7 9.1L7.4 10.7L10.4 7.5" fill="none" stroke="#8fcb57" stroke-width="1"/></svg><div class="t td" style="left:126.2px;top:463.7px;font-size:7.4px">EMPTYPROJECT</div><div class="t td2" style="left:230.8px;top:463.7px">Barbra<br>Borrower</div><div class="t td" style="left:311px;top:463.7px">08/11/2020</div><div class="t td2" style="left:394.2px;top:463.7px">123 Hard Luck Avenue,<br>Tacoma, WA 98555</div><div class="t td2" style="left:503.6px;top:463.7px">Residential Draw<br>- Custom</div><svg class="abs" style="left:593.8px;top:456.25px" width="14" height="14" viewBox="0 0 14 14">
<circle cx="7" cy="7" r="5" fill="none" stroke="#f0f0f0" stroke-width="2.6"/>
<path d="M3.85 3.11A5 5 0 1 1 2.09 7.95" fill="none" stroke="#8fcb57" stroke-width="2.7"/></svg><div class="t td" style="left:612.9px;top:463.7px">82%</div><div class="t td" style="left:666.5px;top:463.7px;font-size:8px">Active</div><div class="abs btn" style="left:705.3px;top:454.35px;background:#8fcb57;color:#fff"><span>Budget Review</span></div><svg class="abs" style="opacity:.85;left:97.4px;top:484.05px;font-family:'Liberation Sans',sans-serif" width="20" height="14" viewBox="0 0 20 14">
<circle cx="12.6" cy="7" r="5.7" fill="none" stroke="#8fcb57" stroke-width="1"/>
<circle cx="12.6" cy="7" r="4.3" fill="none" stroke="#8fcb57" stroke-width="0.45" opacity=".8"/>
<text x="12.6" y="9.5" text-anchor="middle" font-size="7.2" font-weight="bold" fill="#8fcb57">$</text>
<path d="M1 8.8L6.6 5.2V8.8Z" fill="#8fcb57" opacity=".45"/></svg><div class="t td" style="left:127.2px;top:491.1px;font-size:7.4px">EMPTYPROJECT</div><div class="t td2" style="left:231.8px;top:491.1px">Barbra<br>Borrower</div><div class="t td" style="left:312px;top:491.1px">08/11/2020</div><div class="t td2" style="left:395.2px;top:491.1px">123 Hard Luck Avenue,<br>Tacoma, WA 98555</div><div class="t td2" style="left:504.6px;top:491.1px">Residential Draw<br>- Custom</div><svg class="abs" style="left:594.8px;top:483.65000000000003px" width="14" height="14" viewBox="0 0 14 14">
<circle cx="7" cy="7" r="5" fill="none" stroke="#f0f0f0" stroke-width="2.6"/>
<path d="M3.85 3.11A5 5 0 1 1 2.09 7.95" fill="none" stroke="#8fcb57" stroke-width="2.7"/></svg><div class="t td" style="left:613.9px;top:491.1px">82%</div><div class="t td" style="left:667.5px;top:491.1px;font-size:8px">Active</div><div class="abs btn" style="left:706.3px;top:481.75px;background:#cfcfcf;color:#f3f3f3"><span>No Actions</span></div><!--TABLEE-->
<!--MAIN-END-->
</body>
</html>
